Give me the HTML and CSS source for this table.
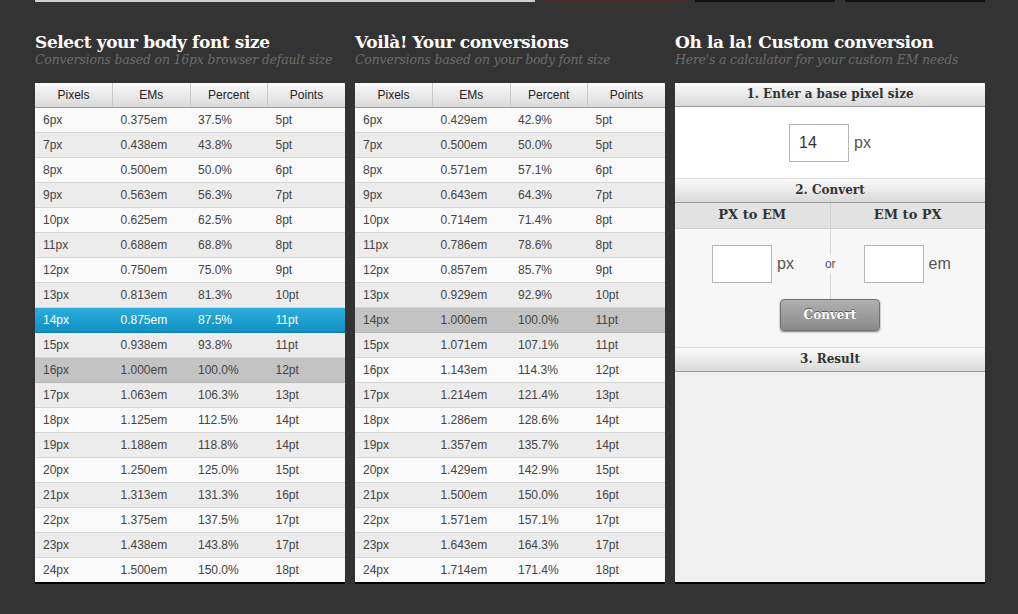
FILE: index.html
```html
<!DOCTYPE html>
<html>
<head>
<meta charset="utf-8">
<link rel="stylesheet" href="styles.css">
</head>
<body>
<div class="topbar">
  <div class="tb tb-search"></div>
  <div class="tb tb-red"></div>
  <div class="tb tb-dark"></div>
  <div class="tb tb-dark"></div>
</div>
<div class="columns">
  <section class="col">
    <h2 class="title">Select your body font size</h2>
    <p class="sub">Conversions based on 16px browser default size</p>
    <table class="conv">
      <thead><tr><th>Pixels</th><th>EMs</th><th>Percent</th><th>Points</th></tr></thead>
      <tbody>
        <tr><td>6px</td><td>0.375em</td><td>37.5%</td><td>5pt</td></tr>
        <tr><td>7px</td><td>0.438em</td><td>43.8%</td><td>5pt</td></tr>
        <tr><td>8px</td><td>0.500em</td><td>50.0%</td><td>6pt</td></tr>
        <tr><td>9px</td><td>0.563em</td><td>56.3%</td><td>7pt</td></tr>
        <tr><td>10px</td><td>0.625em</td><td>62.5%</td><td>8pt</td></tr>
        <tr><td>11px</td><td>0.688em</td><td>68.8%</td><td>8pt</td></tr>
        <tr><td>12px</td><td>0.750em</td><td>75.0%</td><td>9pt</td></tr>
        <tr><td>13px</td><td>0.813em</td><td>81.3%</td><td>10pt</td></tr>
        <tr class="sel"><td>14px</td><td>0.875em</td><td>87.5%</td><td>11pt</td></tr>
        <tr><td>15px</td><td>0.938em</td><td>93.8%</td><td>11pt</td></tr>
        <tr class="base"><td>16px</td><td>1.000em</td><td>100.0%</td><td>12pt</td></tr>
        <tr><td>17px</td><td>1.063em</td><td>106.3%</td><td>13pt</td></tr>
        <tr><td>18px</td><td>1.125em</td><td>112.5%</td><td>14pt</td></tr>
        <tr><td>19px</td><td>1.188em</td><td>118.8%</td><td>14pt</td></tr>
        <tr><td>20px</td><td>1.250em</td><td>125.0%</td><td>15pt</td></tr>
        <tr><td>21px</td><td>1.313em</td><td>131.3%</td><td>16pt</td></tr>
        <tr><td>22px</td><td>1.375em</td><td>137.5%</td><td>17pt</td></tr>
        <tr><td>23px</td><td>1.438em</td><td>143.8%</td><td>17pt</td></tr>
        <tr><td>24px</td><td>1.500em</td><td>150.0%</td><td>18pt</td></tr>
      </tbody>
    </table>
  </section>
  <section class="col">
    <h2 class="title">Voilà! Your conversions</h2>
    <p class="sub">Conversions based on your body font size</p>
    <table class="conv">
      <thead><tr><th>Pixels</th><th>EMs</th><th>Percent</th><th>Points</th></tr></thead>
      <tbody>
        <tr><td>6px</td><td>0.429em</td><td>42.9%</td><td>5pt</td></tr>
        <tr><td>7px</td><td>0.500em</td><td>50.0%</td><td>5pt</td></tr>
        <tr><td>8px</td><td>0.571em</td><td>57.1%</td><td>6pt</td></tr>
        <tr><td>9px</td><td>0.643em</td><td>64.3%</td><td>7pt</td></tr>
        <tr><td>10px</td><td>0.714em</td><td>71.4%</td><td>8pt</td></tr>
        <tr><td>11px</td><td>0.786em</td><td>78.6%</td><td>8pt</td></tr>
        <tr><td>12px</td><td>0.857em</td><td>85.7%</td><td>9pt</td></tr>
        <tr><td>13px</td><td>0.929em</td><td>92.9%</td><td>10pt</td></tr>
        <tr class="base"><td>14px</td><td>1.000em</td><td>100.0%</td><td>11pt</td></tr>
        <tr><td>15px</td><td>1.071em</td><td>107.1%</td><td>11pt</td></tr>
        <tr><td>16px</td><td>1.143em</td><td>114.3%</td><td>12pt</td></tr>
        <tr><td>17px</td><td>1.214em</td><td>121.4%</td><td>13pt</td></tr>
        <tr><td>18px</td><td>1.286em</td><td>128.6%</td><td>14pt</td></tr>
        <tr><td>19px</td><td>1.357em</td><td>135.7%</td><td>14pt</td></tr>
        <tr><td>20px</td><td>1.429em</td><td>142.9%</td><td>15pt</td></tr>
        <tr><td>21px</td><td>1.500em</td><td>150.0%</td><td>16pt</td></tr>
        <tr><td>22px</td><td>1.571em</td><td>157.1%</td><td>17pt</td></tr>
        <tr><td>23px</td><td>1.643em</td><td>164.3%</td><td>17pt</td></tr>
        <tr><td>24px</td><td>1.714em</td><td>171.4%</td><td>18pt</td></tr>
      </tbody>
    </table>
  </section>
  <section class="col">
    <h2 class="title">Oh la la! Custom conversion</h2>
    <p class="sub">Here's a calculator for your custom EM needs</p>
    <div class="panel">
      <div class="phead">1. Enter a base pixel size</div>
      <div class="base-row">
        <div class="field">14</div><span class="unit">px</span>
      </div>
      <div class="phead phead-top">2. Convert</div>
      <div class="split-head">
        <div class="sh">PX to EM</div>
        <div class="sh">EM to PX</div>
      </div>
      <div class="convert-area">
        <div class="halves">
          <div class="half left"><div class="field"></div><span class="unit">px</span></div>
          <span class="or">or</span>
          <div class="half right"><div class="field"></div><span class="unit">em</span></div>
        </div>
        <button class="btn">Convert</button>
      </div>
      <div class="phead phead-top">3. Result</div>
    </div>
  </section>
</div>
</body>
</html>
```

FILE: styles.css
```css
* { box-sizing: border-box; }
html, body { margin: 0; padding: 0; }
body {
  background: #333333;
  font-family: "Liberation Sans", Arial, sans-serif;
  width: 1018px;
  height: 614px;
  overflow: hidden;
}
.topbar {
  display: flex;
  gap: 10px;
  padding-left: 35px;
  height: 2px;
}
.tb { height: 2px; }
.tb-search { width: 500px; background: #cfcfcf; }
.tb-red { width: 140px; background: #4d2727; }
.tb-dark { width: 140px; background: #111; }

.columns {
  display: flex;
  gap: 10px;
  padding-left: 35px;
  margin-top: 29px;
}
.col { width: 310px; }
.title {
  margin: 0;
  font-family: "DejaVu Serif", Georgia, serif;
  font-weight: bold;
  font-size: 17px;
  line-height: 22px;
  color: #fff;
  letter-spacing: -0.4px;
  white-space: nowrap;
}
.sub {
  margin: 0 0 16px;
  font-family: "DejaVu Serif", Georgia, serif;
  font-style: italic;
  font-size: 12.5px;
  line-height: 14px;
  color: #6c6c6c;
  letter-spacing: -0.2px;
  white-space: nowrap;
}

.conv {
  width: 310px;
  border-collapse: collapse;
  table-layout: fixed;
  box-shadow: 0 2px 0 #000;
}
.conv th {
  height: 24px;
  padding: 0;
  font-weight: normal;
  font-size: 12px;
  color: #222;
  text-align: center;
  background: linear-gradient(#fafafa, #d9d9d9);
  border-bottom: 1px solid #9a9a9a;
  border-left: 1px solid #c9c9c9;
}
.conv th:first-child { border-left: none; }
.conv td {
  height: 25px;
  padding: 0 0 0 8px;
  font-size: 12px;
  color: #444;
  border-bottom: 1px solid #d6d6d6;
}
.conv tbody tr:nth-child(odd) { background: #f9f9f9; }
.conv tbody tr:nth-child(even) { background: #ececec; }
.conv tbody tr:last-child td { border-bottom: none; }
.conv tbody tr.sel { background: linear-gradient(#2eaedd, #0f90c2); }
.conv tbody tr.sel td { color: #fff; border-bottom-color: #0d7fae; }
.conv tbody tr.base { background: #c3c3c3; }
.conv tbody tr.base td { color: #444; border-bottom-color: #b5b5b5; }

.panel {
  height: 499px;
  background: #f0f0f0;
  box-shadow: 0 2px 0 #000;
}
.phead {
  height: 24px;
  line-height: 23px;
  text-align: center;
  font-family: "DejaVu Serif", Georgia, serif;
  font-weight: bold;
  font-size: 12px;
  color: #333;
  background: linear-gradient(#fafafa, #d9d9d9);
  border-bottom: 1px solid #9a9a9a;
}
.phead-top { border-top: 1px solid #dedede; height: 25px; }
.base-row {
  height: 71px;
  background: #fff;
  display: flex;
  align-items: center;
  justify-content: center;
  gap: 5px;
}
.field {
  width: 60px;
  height: 38px;
  border: 1px solid #b5b5b5;
  background: #fff;
  font-size: 16px;
  color: #333;
  line-height: 36px;
  padding-left: 9px;
}
.unit { font-size: 16px; color: #555; }
.split-head { display: flex; background: #e2e2e2; border-bottom: 1px solid #cfcfcf; }
.sh {
  flex: 1;
  height: 25px;
  line-height: 24px;
  text-align: center;
  font-family: "DejaVu Serif", Georgia, serif;
  font-weight: bold;
  font-size: 13px;
  color: #333;
}
.sh + .sh { border-left: 1px solid #cfcfcf; }
.convert-area {
  height: 118px;
  background: #f7f7f7;
  display: flex;
  flex-direction: column;
  align-items: center;
  background-image: linear-gradient(#d8d8d8, #d8d8d8);
  background-size: 1px 70px;
  background-position: 155px 0;
  background-repeat: no-repeat;
}
.halves {
  display: flex;
  align-items: center;
  width: 100%;
  padding-top: 16px;
}
.half { display: flex; align-items: center; gap: 5px; }
.half.left { margin-left: 37px; }
.half.right { margin-left: 28px; }
.or {
  font-size: 12px;
  color: #555;
  margin-left: 31px;
  background: #f7f7f7;
  padding: 2px 0;
}
.btn {
  margin-top: 16px;
  width: 100px;
  height: 32px;
  border: 1px solid #707070;
  border-radius: 4px;
  background: linear-gradient(#b0b0b0, #8a8a8a);
  box-shadow: 0 1px 2px rgba(0,0,0,0.5);
  color: #fff;
  font-family: "DejaVu Serif", Georgia, serif;
  font-weight: bold;
  font-size: 12px;
  text-shadow: 0 -1px 0 #555;
  padding: 0;
}
```
